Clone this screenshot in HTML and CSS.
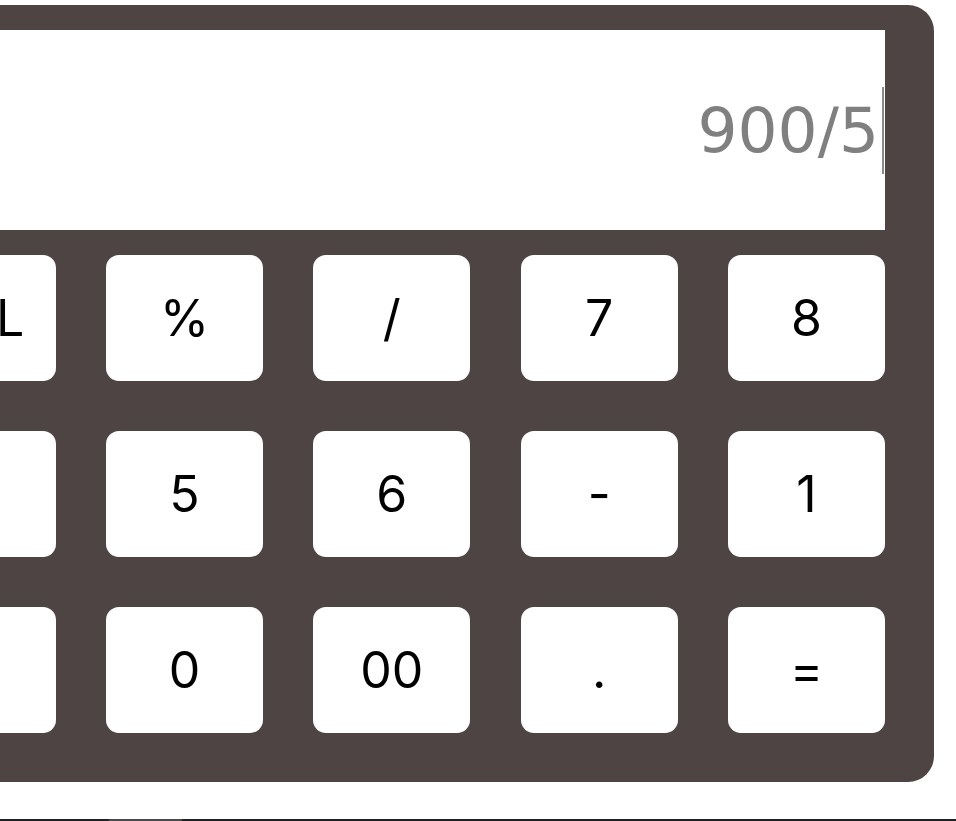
FILE: index.html
```html
<!DOCTYPE html>
<html lang="en">
<head>
<meta charset="utf-8">
<title>Calculator</title>
<link rel="stylesheet" href="styles.css">
</head>
<body>
<div class="stage">
  <div class="calc">
    <div class="display"><span class="expr">900/5</span><span class="caret"></span></div>
    <div class="keys">
      <button class="key">DEL</button>
      <button class="key">%</button>
      <button class="key">/</button>
      <button class="key">7</button>
      <button class="key">8</button>
      <button class="key" aria-label="4"></button>
      <button class="key">5</button>
      <button class="key">6</button>
      <button class="key">-</button>
      <button class="key">1</button>
      <button class="key" aria-label="+"></button>
      <button class="key">0</button>
      <button class="key">00</button>
      <button class="key">.</button>
      <button class="key">=</button>
    </div>
  </div>
</div>
<div class="scrollbar"><div class="thumb"></div></div>
</body>
</html>
```

FILE: styles.css
```css
html, body {
  margin: 0;
  padding: 0;
  background: #ffffff;
  overflow: hidden;
}

.stage {
  display: flex;
  justify-content: flex-end;
  padding: 5px 22px 0 0;
}

.calc {
  flex: none;
  background: #4e4444;
  border-radius: 26px;
  padding: 25px 49px 49px 49px;
  display: flex;
  flex-direction: column;
  gap: 25px;
}

.display {
  background: #ffffff;
  height: 200px;
  display: flex;
  align-items: center;
  justify-content: flex-end;
  padding-right: 1px;
  font-family: "DejaVu Sans", sans-serif;
  font-size: 63px;
  color: #808080;
}

.caret {
  display: inline-block;
  width: 2px;
  height: 87px;
  background: #8a8a8a;
  margin-left: 3px;
}

.keys {
  display: grid;
  grid-template-columns: repeat(5, 157px);
  grid-auto-rows: 126px;
  column-gap: 50.33px;
  row-gap: 50px;
}

.key {
  border: none;
  margin: 0;
  padding: 0;
  background: #ffffff;
  border-radius: 13px;
  display: flex;
  align-items: center;
  justify-content: center;
  font-family: "Inter", sans-serif;
  font-size: 50px;
  font-weight: 400;
  color: #000000;
}

.scrollbar {
  margin-top: 37px;
  height: 2px;
  background: #202124;
  display: flex;
}

.thumb {
  margin-left: 109px;
  width: 73px;
  background: #4a4a4d;
}
```
